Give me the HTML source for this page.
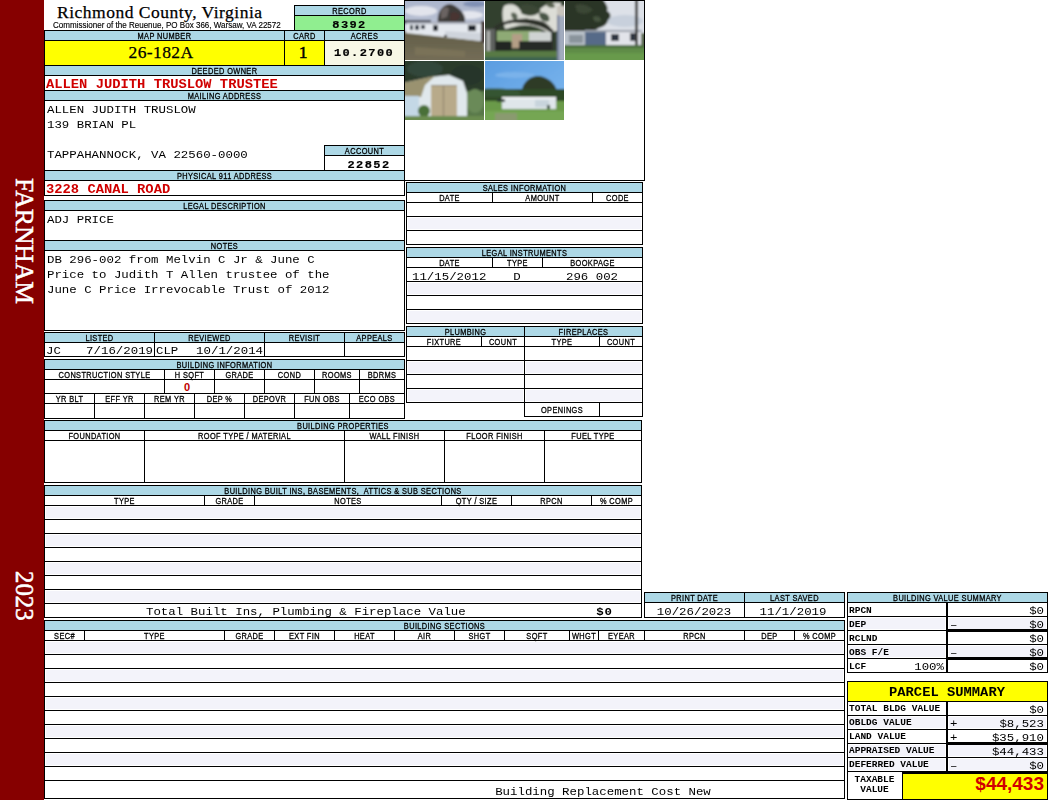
<!DOCTYPE html>
<html><head><meta charset="utf-8"><style>
html,body{margin:0;padding:0;background:#fff;}
body{width:1050px;height:800px;position:relative;overflow:hidden;}
.a{position:absolute;}
.t{position:absolute;white-space:pre;overflow:visible;}
</style></head><body>
<div class="a" style="left:405px;top:1px;width:79px;height:59px;overflow:hidden"><svg width="79" height="59" viewBox="0 0 79 59" style="display:block"><defs><filter id="pb1" x="-10%" y="-10%" width="120%" height="120%"><feGaussianBlur stdDeviation="0.8"/></filter></defs><g filter="url(#pb1)">
<defs><linearGradient id="s1" x1="0" y1="0" x2="0" y2="1"><stop offset="0" stop-color="#aab4cc"/><stop offset="1" stop-color="#d2d6e0"/></linearGradient>
<linearGradient id="g1" x1="0" y1="0" x2="0" y2="1"><stop offset="0" stop-color="#625e48"/><stop offset="1" stop-color="#756e58"/></linearGradient></defs>
<rect x="-2" y="-2" width="83" height="63" fill="url(#s1)"/>
<ellipse cx="16" cy="10" rx="16" ry="5" fill="#e2e4ec"/>
<ellipse cx="64" cy="14" rx="14" ry="4" fill="#e4e6ee"/>
<ellipse cx="70" cy="3" rx="12" ry="3" fill="#8090b4"/>
<path d="M33 22 C32 16 34 10 37 7 C40 3 46 2 50 5 C55 8 59 12 60 17 L60 22 Z" fill="#3e3a38"/>
<path d="M36 10 C38 6 42 5 44 8 L42 16 L36 18Z" fill="#6a6462"/>
<path d="M46 12 C50 10 54 12 55 16 L50 20 L45 19Z" fill="#4a3632"/>
<rect x="-2" y="19" width="28" height="4" fill="#3a3c4a"/>
<path d="M-2 30 L79 38 L81 61 L-2 61Z" fill="url(#g1)"/>
<path d="M10 46 L60 50 L60 56 L10 54Z" fill="#7a7258"/>
<path d="M1 22 L76 22 L76 40 L1 32Z" fill="#e4e8ee"/>
<path d="M40 30 L76 32 L76 40 L40 36Z" fill="#cfd4dc"/>
<rect x="1" y="21" width="75" height="2" fill="#a8acb8"/>
<rect x="5" y="24" width="3" height="5" fill="#26323c"/>
<rect x="10" y="24" width="4" height="5" fill="#26323c"/>
<rect x="16" y="24" width="4" height="4" fill="#26323c"/>
<rect x="28" y="24" width="5" height="6" fill="#20262e"/>
<rect x="63" y="24" width="8" height="6" fill="#20262e"/>
<rect x="76" y="20" width="5" height="22" fill="#4a3c3a"/>
<rect x="39" y="34" width="3" height="2" fill="#303030"/>
</g></svg></div><div class="a" style="left:485px;top:1px;width:79px;height:59px;overflow:hidden"><svg width="79" height="59" viewBox="0 0 79 59" style="display:block"><defs><filter id="pb2" x="-10%" y="-10%" width="120%" height="120%"><feGaussianBlur stdDeviation="0.8"/></filter></defs><g filter="url(#pb2)">
<rect x="-2" y="-2" width="83" height="63" fill="#33402e"/>
<path d="M19 5 C24 2 32 3 35 9 C40 14 46 14 54 9 C60 4 66 0 76 2 L74 30 L62 31 C56 27 48 24 40 24 C32 24 26 27 20 28 C18 20 16 12 19 5Z" fill="#dcddd6"/>
<path d="M36 4 C42 2 52 4 56 10 C50 16 42 16 36 12Z" fill="#3a4636"/>
<path d="M54 12 C60 10 66 14 64 20 C58 22 54 18 54 12Z" fill="#4a5646"/>
<path d="M26 12 C30 10 34 14 32 18 C28 20 26 16 26 12Z" fill="#5a6454"/>
<path d="M60 2 C64 0 70 2 70 6 C66 8 62 6 60 2Z" fill="#56604e"/>
<path d="M38 18 C42 16 46 18 46 21 C42 22 40 21 38 18Z" fill="#606a5a"/>
<path d="M8 27 C20 17 40 16 56 20 C62 22 66 26 68 31 L66 32 C58 25 44 22 30 22 C20 22 14 26 10 31Z" fill="#2e302c"/>
<rect x="12" y="30" width="44" height="11" fill="#8eaa74"/>
<rect x="44" y="31" width="24" height="14" fill="#cfd3d2"/>
<rect x="27" y="33" width="10" height="14" fill="#b39e86"/>
<rect x="8" y="40" width="18" height="11" fill="#242824"/>
<rect x="34" y="40" width="32" height="10" fill="#282a28"/>
<rect x="66" y="28" width="2" height="24" fill="#2a2a2a"/>
<rect x="-2" y="28" width="12" height="25" fill="#5e625e"/>
<rect x="2" y="30" width="3" height="21" fill="#b0b2b0"/>
<rect x="-2" y="50" width="83" height="11" fill="#587a44"/>
<rect x="-2" y="56" width="83" height="5" fill="#3e6450"/>
<rect x="72" y="14" width="8" height="46" fill="#a2acbe"/>
<rect x="72" y="5" width="8" height="10" fill="#c8c4bc"/>
<rect x="72" y="14" width="2" height="46" fill="#76809a"/>
</g></svg></div><div class="a" style="left:565px;top:1px;width:79px;height:59px;overflow:hidden"><svg width="79" height="59" viewBox="0 0 79 59" style="display:block"><defs><filter id="pb3" x="-10%" y="-10%" width="120%" height="120%"><feGaussianBlur stdDeviation="0.8"/></filter></defs><g filter="url(#pb3)">
<rect x="-2" y="-2" width="83" height="63" fill="#dde1e8"/>
<ellipse cx="60" cy="20" rx="18" ry="6" fill="#c8d0dc"/>
<path d="M-2 -2 H38 C40 2 44 6 42 10 C46 12 47 16 43 19 C42 24 38 26 34 27 C30 30 24 31 18 30 L-2 33Z" fill="#2a3526"/>
<path d="M10 4 C16 2 24 4 28 9 C24 13 18 14 12 11Z" fill="#3a4634"/>
<path d="M28 16 C32 14 36 16 36 20 C32 22 28 20 28 16Z" fill="#465440"/>
<rect x="26" y="26" width="2" height="6" fill="#2a2a24"/>
<rect x="-2" y="30" width="22" height="14" fill="#b8c0c8"/>
<rect x="4" y="34" width="14" height="8" fill="#8a949c"/>
<rect x="20" y="29" width="21" height="15" fill="#566a88"/>
<rect x="41" y="29" width="36" height="15" fill="#e2e4ea"/>
<rect x="20" y="29" width="57" height="2" fill="#9aa0ac"/>
<rect x="46" y="33" width="8" height="7" fill="#2e3440"/>
<rect x="65" y="32" width="5" height="8" fill="#2e3440"/>
<rect x="70" y="-2" width="3" height="48" fill="#3c3c3c"/>
<rect x="76" y="32" width="5" height="12" fill="#5a6a50"/>
<rect x="-2" y="44" width="83" height="17" fill="#5e8c46"/>
<rect x="-2" y="44" width="83" height="3" fill="#4e7040"/>
<rect x="-2" y="52" width="83" height="9" fill="#679a4c"/>
</g></svg></div><div class="a" style="left:405px;top:61px;width:79px;height:59px;overflow:hidden"><svg width="79" height="59" viewBox="0 0 79 59" style="display:block"><defs><filter id="pb4" x="-10%" y="-10%" width="120%" height="120%"><feGaussianBlur stdDeviation="0.8"/></filter></defs><g filter="url(#pb4)">
<rect x="-2" y="-2" width="83" height="63" fill="#2a3a2c"/>
<ellipse cx="20" cy="8" rx="18" ry="8" fill="#33463a"/>
<ellipse cx="62" cy="14" rx="16" ry="10" fill="#26342a"/>
<rect x="60" y="30" width="21" height="27" fill="#58784a"/>
<ellipse cx="70" cy="40" rx="9" ry="12" fill="#6a8a58"/>
<path d="M-2 22 L26 16 L44 14 L58 20 L62 32 L62 56 L14 56 L14 36 L-2 36Z" fill="#e0e8ec"/>
<path d="M-2 22 L30 15 L20 24 L16 36 L-2 36Z" fill="#9a9270"/>
<rect x="-2" y="35" width="16" height="21" fill="#c4d8e6"/>
<rect x="26" y="24" width="26" height="31" fill="#b8aa8a"/>
<rect x="38" y="24" width="1" height="31" fill="#8a7e66"/>
<rect x="26" y="24" width="26" height="1" fill="#8a8070"/>
<ellipse cx="19" cy="50" rx="6" ry="6" fill="#4a7038"/>
<rect x="-2" y="55" width="83" height="6" fill="#6a8c50"/>
</g></svg></div><div class="a" style="left:485px;top:61px;width:79px;height:59px;overflow:hidden"><svg width="79" height="59" viewBox="0 0 79 59" style="display:block"><defs><filter id="pb5" x="-10%" y="-10%" width="120%" height="120%"><feGaussianBlur stdDeviation="0.8"/></filter></defs><g filter="url(#pb5)">
<defs><linearGradient id="s5" x1="0" y1="0" x2="1" y2="1"><stop offset="0" stop-color="#5a9ce0"/><stop offset="1" stop-color="#80baf0"/></linearGradient></defs>
<rect x="-2" y="-2" width="83" height="63" fill="url(#s5)"/>
<ellipse cx="30" cy="14" rx="20" ry="3" fill="#7ab2ea"/>
<path d="M36 36 C36 24 42 16 52 15 C62 15 70 22 72 30 L72 38Z" fill="#2e3a26"/>
<rect x="-2" y="28" width="83" height="14" fill="#2e4828"/>
<path d="M-2 28 C10 27 25 28 34 30 L36 36 L-2 36Z" fill="#355530"/>
<rect x="-2" y="40" width="83" height="21" fill="#6a9a4a"/>
<rect x="-2" y="50" width="83" height="11" fill="#74a652"/>
<rect x="10" y="52" width="22" height="9" fill="#8a9a70"/>
<rect x="17" y="36" width="54" height="12" fill="#dfe6ea"/>
<rect x="17" y="36" width="54" height="2" fill="#f2f4f6"/>
<rect x="50" y="39" width="14" height="7" fill="#c8d4dc"/>
<rect x="62" y="44" width="3" height="4" fill="#2a4a30"/>
<rect x="12" y="38" width="8" height="3" fill="#2a3a30"/>
</g></svg></div>
<div class="a" style="left:0px;top:0px;width:44px;height:800px;background:#860000"></div>
<div class="t" style="left:11px;top:178px;width:26px;height:130px;color:#fff;font-family:'Liberation Serif',serif;font-size:25.6px;line-height:26px;writing-mode:vertical-rl;-webkit-text-stroke:0.5px #fff">FARNHAM</div>
<div class="t" style="left:11px;top:571px;width:26px;height:60px;color:#fff;font-family:'Liberation Serif',serif;font-size:24.8px;line-height:26px;writing-mode:vertical-rl;-webkit-text-stroke:0.5px #fff">2023</div>
<div class="t" style="left:57px;top:3.59px;width:343px;font-family:'Liberation Serif', serif;font-size:17.5px;line-height:17.5px;height:17.5px;text-align:left;font-weight:normal;color:#000;letter-spacing:0.5px;-webkit-text-stroke:0.25px #000;">Richmond County, Virginia</div>
<div class="t" style="left:53px;top:20.97px;width:347px;font-family:'Liberation Sans', sans-serif;font-size:8.6px;line-height:8.6px;height:8.6px;text-align:left;font-weight:normal;color:#000;letter-spacing:0px;transform:scaleX(0.935);transform-origin:0 0;-webkit-text-stroke:0.15px #000;">Commissioner of the Reuenue, PO Box 366, Warsaw, VA 22572</div>
<div class="a" style="left:295px;top:6px;width:109px;height:9px;background:#add8e6"></div>
<div class="t" style="left:295px;top:6.97px;width:109px;font-family:'Liberation Sans', sans-serif;font-size:8.6px;line-height:8.6px;height:8.6px;text-align:center;font-weight:normal;color:#000;letter-spacing:0.45px;transform:scaleX(0.86);transform-origin:50% 50%;-webkit-text-stroke:0.3px #000;">RECORD</div>
<div class="a" style="left:295px;top:16px;width:109px;height:14px;background:#90ee90"></div>
<div class="a" style="left:294px;top:5px;width:111px;height:1px;background:#000"></div>
<div class="a" style="left:294px;top:30px;width:111px;height:1px;background:#000"></div>
<div class="a" style="left:294px;top:5px;width:1px;height:26px;background:#000"></div>
<div class="a" style="left:404px;top:5px;width:1px;height:26px;background:#000"></div>
<div class="a" style="left:294px;top:15px;width:111px;height:1px;background:#000"></div>
<div class="t" style="left:295px;top:19.05px;width:109px;font-family:'Liberation Mono', monospace;font-size:12px;line-height:12px;height:12px;text-align:center;font-weight:bold;color:#000;letter-spacing:1.4px;transform:scaleY(0.84);transform-origin:0 9.20px;-webkit-text-stroke:0.2px #000;">8392</div>
<div class="a" style="left:45px;top:31px;width:239px;height:9px;background:#add8e6"></div>
<div class="t" style="left:45px;top:31.97px;width:239px;font-family:'Liberation Sans', sans-serif;font-size:8.6px;line-height:8.6px;height:8.6px;text-align:center;font-weight:normal;color:#000;letter-spacing:0.45px;transform:scaleX(0.86);transform-origin:50% 50%;-webkit-text-stroke:0.3px #000;">MAP NUMBER</div>
<div class="a" style="left:285px;top:31px;width:39px;height:9px;background:#add8e6"></div>
<div class="t" style="left:285px;top:31.97px;width:39px;font-family:'Liberation Sans', sans-serif;font-size:8.6px;line-height:8.6px;height:8.6px;text-align:center;font-weight:normal;color:#000;letter-spacing:0.45px;transform:scaleX(0.86);transform-origin:50% 50%;-webkit-text-stroke:0.3px #000;">CARD</div>
<div class="a" style="left:325px;top:31px;width:79px;height:9px;background:#add8e6"></div>
<div class="t" style="left:325px;top:31.97px;width:79px;font-family:'Liberation Sans', sans-serif;font-size:8.6px;line-height:8.6px;height:8.6px;text-align:center;font-weight:normal;color:#000;letter-spacing:0.45px;transform:scaleX(0.86);transform-origin:50% 50%;-webkit-text-stroke:0.3px #000;">ACRES</div>
<div class="a" style="left:45px;top:41px;width:239px;height:24px;background:#ffff00"></div>
<div class="a" style="left:285px;top:41px;width:39px;height:24px;background:#ffff00"></div>
<div class="a" style="left:325px;top:41px;width:79px;height:24px;background:#f7f7e6"></div>
<div class="a" style="left:44px;top:30px;width:361px;height:1px;background:#000"></div>
<div class="a" style="left:44px;top:40px;width:361px;height:1px;background:#000"></div>
<div class="a" style="left:44px;top:65px;width:361px;height:1px;background:#000"></div>
<div class="a" style="left:44px;top:30px;width:1px;height:36px;background:#000"></div>
<div class="a" style="left:284px;top:30px;width:1px;height:36px;background:#000"></div>
<div class="a" style="left:324px;top:30px;width:1px;height:36px;background:#000"></div>
<div class="a" style="left:404px;top:30px;width:1px;height:36px;background:#000"></div>
<div class="t" style="left:38px;top:43.59px;width:246px;font-family:'Liberation Serif', serif;font-size:17.5px;line-height:17.5px;height:17.5px;text-align:center;font-weight:normal;color:#000;letter-spacing:0.4px;-webkit-text-stroke:0.25px #000;">26-182A</div>
<div class="t" style="left:282px;top:43.59px;width:42px;font-family:'Liberation Serif', serif;font-size:17.5px;line-height:17.5px;height:17.5px;text-align:center;font-weight:normal;color:#000;letter-spacing:0px;-webkit-text-stroke:0.5px #000;">1</div>
<div class="t" style="left:324px;top:47.05px;width:80px;font-family:'Liberation Mono', monospace;font-size:12px;line-height:12px;height:12px;text-align:center;font-weight:bold;color:#000;letter-spacing:1.4px;transform:scaleY(0.88);transform-origin:0 9.20px;-webkit-text-stroke:0.2px #000;">10.2700</div>
<div class="a" style="left:45px;top:66px;width:359px;height:9px;background:#add8e6"></div>
<div class="t" style="left:45px;top:66.97px;width:359px;font-family:'Liberation Sans', sans-serif;font-size:8.6px;line-height:8.6px;height:8.6px;text-align:center;font-weight:normal;color:#000;letter-spacing:0.45px;transform:scaleX(0.86);transform-origin:50% 50%;-webkit-text-stroke:0.3px #000;">DEEDED OWNER</div>
<div class="a" style="left:44px;top:75px;width:361px;height:1px;background:#000"></div>
<div class="a" style="left:44px;top:90px;width:361px;height:1px;background:#000"></div>
<div class="a" style="left:44px;top:65px;width:1px;height:26px;background:#000"></div>
<div class="a" style="left:404px;top:65px;width:1px;height:26px;background:#000"></div>
<div class="t" style="left:46px;top:77.67px;width:358px;font-family:'Liberation Mono', monospace;font-size:13.8px;line-height:13.8px;height:13.8px;text-align:left;font-weight:bold;color:#d00000;letter-spacing:0px;transform:scaleY(0.93);transform-origin:0 10.58px;">ALLEN JUDITH TRUSLOW TRUSTEE</div>
<div class="a" style="left:45px;top:91px;width:359px;height:9px;background:#add8e6"></div>
<div class="t" style="left:45px;top:91.97px;width:359px;font-family:'Liberation Sans', sans-serif;font-size:8.6px;line-height:8.6px;height:8.6px;text-align:center;font-weight:normal;color:#000;letter-spacing:0.45px;transform:scaleX(0.86);transform-origin:50% 50%;-webkit-text-stroke:0.3px #000;">MAILING ADDRESS</div>
<div class="a" style="left:44px;top:100px;width:361px;height:1px;background:#000"></div>
<div class="a" style="left:44px;top:90px;width:1px;height:81px;background:#000"></div>
<div class="a" style="left:404px;top:90px;width:1px;height:81px;background:#000"></div>
<div class="t" style="left:47px;top:103.75px;width:357px;font-family:'Liberation Mono', monospace;font-size:12.4px;line-height:12.4px;height:12.4px;text-align:left;font-weight:normal;color:#000;letter-spacing:0px;transform:scaleY(0.93);transform-origin:0 9.50px;">ALLEN JUDITH TRUSLOW</div>
<div class="t" style="left:47px;top:118.75px;width:357px;font-family:'Liberation Mono', monospace;font-size:12.4px;line-height:12.4px;height:12.4px;text-align:left;font-weight:normal;color:#000;letter-spacing:0px;transform:scaleY(0.93);transform-origin:0 9.50px;">139 BRIAN PL</div>
<div class="t" style="left:47px;top:148.75px;width:357px;font-family:'Liberation Mono', monospace;font-size:12.4px;line-height:12.4px;height:12.4px;text-align:left;font-weight:normal;color:#000;letter-spacing:0px;transform:scaleY(0.93);transform-origin:0 9.50px;">TAPPAHANNOCK, VA 22560-0000</div>
<div class="a" style="left:325px;top:146px;width:79px;height:9px;background:#add8e6"></div>
<div class="t" style="left:325px;top:146.97px;width:79px;font-family:'Liberation Sans', sans-serif;font-size:8.6px;line-height:8.6px;height:8.6px;text-align:center;font-weight:normal;color:#000;letter-spacing:0.45px;transform:scaleX(0.86);transform-origin:50% 50%;-webkit-text-stroke:0.3px #000;">ACCOUNT</div>
<div class="a" style="left:324px;top:145px;width:81px;height:1px;background:#000"></div>
<div class="a" style="left:324px;top:170px;width:81px;height:1px;background:#000"></div>
<div class="a" style="left:324px;top:145px;width:1px;height:26px;background:#000"></div>
<div class="a" style="left:404px;top:145px;width:1px;height:26px;background:#000"></div>
<div class="a" style="left:324px;top:155px;width:81px;height:1px;background:#000"></div>
<div class="t" style="left:329px;top:159.05px;width:80px;font-family:'Liberation Mono', monospace;font-size:12px;line-height:12px;height:12px;text-align:center;font-weight:bold;color:#000;letter-spacing:1.4px;transform:scaleY(0.88);transform-origin:0 9.20px;-webkit-text-stroke:0.2px #000;">22852</div>
<div class="a" style="left:45px;top:171px;width:359px;height:9px;background:#add8e6"></div>
<div class="t" style="left:45px;top:171.97px;width:359px;font-family:'Liberation Sans', sans-serif;font-size:8.6px;line-height:8.6px;height:8.6px;text-align:center;font-weight:normal;color:#000;letter-spacing:0.45px;transform:scaleX(0.86);transform-origin:50% 50%;-webkit-text-stroke:0.3px #000;">PHYSICAL 911 ADDRESS</div>
<div class="a" style="left:44px;top:170px;width:361px;height:1px;background:#000"></div>
<div class="a" style="left:44px;top:180px;width:361px;height:1px;background:#000"></div>
<div class="a" style="left:44px;top:195px;width:361px;height:1px;background:#000"></div>
<div class="a" style="left:44px;top:170px;width:1px;height:26px;background:#000"></div>
<div class="a" style="left:404px;top:170px;width:1px;height:26px;background:#000"></div>
<div class="t" style="left:46px;top:182.67px;width:358px;font-family:'Liberation Mono', monospace;font-size:13.8px;line-height:13.8px;height:13.8px;text-align:left;font-weight:bold;color:#d00000;letter-spacing:0px;transform:scaleY(0.93);transform-origin:0 10.58px;">3228 CANAL ROAD</div>
<div class="a" style="left:45px;top:201px;width:359px;height:9px;background:#add8e6"></div>
<div class="t" style="left:45px;top:201.97px;width:359px;font-family:'Liberation Sans', sans-serif;font-size:8.6px;line-height:8.6px;height:8.6px;text-align:center;font-weight:normal;color:#000;letter-spacing:0.45px;transform:scaleX(0.86);transform-origin:50% 50%;-webkit-text-stroke:0.3px #000;">LEGAL DESCRIPTION</div>
<div class="a" style="left:44px;top:200px;width:361px;height:1px;background:#000"></div>
<div class="a" style="left:44px;top:210px;width:361px;height:1px;background:#000"></div>
<div class="a" style="left:44px;top:240px;width:361px;height:1px;background:#000"></div>
<div class="a" style="left:44px;top:200px;width:1px;height:41px;background:#000"></div>
<div class="a" style="left:404px;top:200px;width:1px;height:41px;background:#000"></div>
<div class="t" style="left:47px;top:213.75px;width:357px;font-family:'Liberation Mono', monospace;font-size:12.4px;line-height:12.4px;height:12.4px;text-align:left;font-weight:normal;color:#000;letter-spacing:0px;transform:scaleY(0.93);transform-origin:0 9.50px;">ADJ PRICE</div>
<div class="a" style="left:45px;top:241px;width:359px;height:9px;background:#add8e6"></div>
<div class="t" style="left:45px;top:241.97px;width:359px;font-family:'Liberation Sans', sans-serif;font-size:8.6px;line-height:8.6px;height:8.6px;text-align:center;font-weight:normal;color:#000;letter-spacing:0.45px;transform:scaleX(0.86);transform-origin:50% 50%;-webkit-text-stroke:0.3px #000;">NOTES</div>
<div class="a" style="left:44px;top:250px;width:361px;height:1px;background:#000"></div>
<div class="a" style="left:44px;top:330px;width:361px;height:1px;background:#000"></div>
<div class="a" style="left:44px;top:240px;width:1px;height:91px;background:#000"></div>
<div class="a" style="left:404px;top:240px;width:1px;height:91px;background:#000"></div>
<div class="t" style="left:47px;top:253.75px;width:357px;font-family:'Liberation Mono', monospace;font-size:12.4px;line-height:12.4px;height:12.4px;text-align:left;font-weight:normal;color:#000;letter-spacing:0px;transform:scaleY(0.93);transform-origin:0 9.50px;">DB 296-002 from Melvin C Jr &amp; June C</div>
<div class="t" style="left:47px;top:268.75px;width:357px;font-family:'Liberation Mono', monospace;font-size:12.4px;line-height:12.4px;height:12.4px;text-align:left;font-weight:normal;color:#000;letter-spacing:0px;transform:scaleY(0.93);transform-origin:0 9.50px;">Price to Judith T Allen trustee of the</div>
<div class="t" style="left:47px;top:283.75px;width:357px;font-family:'Liberation Mono', monospace;font-size:12.4px;line-height:12.4px;height:12.4px;text-align:left;font-weight:normal;color:#000;letter-spacing:0px;transform:scaleY(0.93);transform-origin:0 9.50px;">June C Price Irrevocable Trust of 2012</div>
<div class="a" style="left:45px;top:333px;width:109px;height:9px;background:#add8e6"></div>
<div class="t" style="left:45px;top:333.97px;width:109px;font-family:'Liberation Sans', sans-serif;font-size:8.6px;line-height:8.6px;height:8.6px;text-align:center;font-weight:normal;color:#000;letter-spacing:0.45px;transform:scaleX(0.86);transform-origin:50% 50%;-webkit-text-stroke:0.3px #000;">LISTED</div>
<div class="a" style="left:155px;top:333px;width:109px;height:9px;background:#add8e6"></div>
<div class="t" style="left:155px;top:333.97px;width:109px;font-family:'Liberation Sans', sans-serif;font-size:8.6px;line-height:8.6px;height:8.6px;text-align:center;font-weight:normal;color:#000;letter-spacing:0.45px;transform:scaleX(0.86);transform-origin:50% 50%;-webkit-text-stroke:0.3px #000;">REVIEWED</div>
<div class="a" style="left:265px;top:333px;width:79px;height:9px;background:#add8e6"></div>
<div class="t" style="left:265px;top:333.97px;width:79px;font-family:'Liberation Sans', sans-serif;font-size:8.6px;line-height:8.6px;height:8.6px;text-align:center;font-weight:normal;color:#000;letter-spacing:0.45px;transform:scaleX(0.86);transform-origin:50% 50%;-webkit-text-stroke:0.3px #000;">REVISIT</div>
<div class="a" style="left:345px;top:333px;width:59px;height:9px;background:#add8e6"></div>
<div class="t" style="left:345px;top:333.97px;width:59px;font-family:'Liberation Sans', sans-serif;font-size:8.6px;line-height:8.6px;height:8.6px;text-align:center;font-weight:normal;color:#000;letter-spacing:0.45px;transform:scaleX(0.86);transform-origin:50% 50%;-webkit-text-stroke:0.3px #000;">APPEALS</div>
<div class="a" style="left:44px;top:332px;width:361px;height:1px;background:#000"></div>
<div class="a" style="left:44px;top:342px;width:361px;height:1px;background:#000"></div>
<div class="a" style="left:44px;top:356px;width:361px;height:1px;background:#000"></div>
<div class="a" style="left:44px;top:332px;width:1px;height:25px;background:#000"></div>
<div class="a" style="left:154px;top:332px;width:1px;height:25px;background:#000"></div>
<div class="a" style="left:264px;top:332px;width:1px;height:25px;background:#000"></div>
<div class="a" style="left:344px;top:332px;width:1px;height:25px;background:#000"></div>
<div class="a" style="left:404px;top:332px;width:1px;height:25px;background:#000"></div>
<div class="t" style="left:46px;top:344.75px;width:108px;font-family:'Liberation Mono', monospace;font-size:12.4px;line-height:12.4px;height:12.4px;text-align:left;font-weight:normal;color:#000;letter-spacing:0px;transform:scaleY(0.93);transform-origin:0 9.50px;">JC</div>
<div class="t" style="left:44px;top:344.75px;width:109px;font-family:'Liberation Mono', monospace;font-size:12.4px;line-height:12.4px;height:12.4px;text-align:right;font-weight:normal;color:#000;letter-spacing:0px;transform:scaleY(0.93);transform-origin:0 9.50px;">7/16/2019</div>
<div class="t" style="left:156px;top:344.75px;width:108px;font-family:'Liberation Mono', monospace;font-size:12.4px;line-height:12.4px;height:12.4px;text-align:left;font-weight:normal;color:#000;letter-spacing:0px;transform:scaleY(0.93);transform-origin:0 9.50px;">CLP</div>
<div class="t" style="left:154px;top:344.75px;width:109px;font-family:'Liberation Mono', monospace;font-size:12.4px;line-height:12.4px;height:12.4px;text-align:right;font-weight:normal;color:#000;letter-spacing:0px;transform:scaleY(0.93);transform-origin:0 9.50px;">10/1/2014</div>
<div class="a" style="left:45px;top:360px;width:359px;height:9px;background:#add8e6"></div>
<div class="t" style="left:45px;top:360.97px;width:359px;font-family:'Liberation Sans', sans-serif;font-size:8.6px;line-height:8.6px;height:8.6px;text-align:center;font-weight:normal;color:#000;letter-spacing:0.45px;transform:scaleX(0.86);transform-origin:50% 50%;-webkit-text-stroke:0.3px #000;">BUILDING INFORMATION</div>
<div class="a" style="left:44px;top:359px;width:361px;height:1px;background:#000"></div>
<div class="a" style="left:44px;top:369px;width:361px;height:1px;background:#000"></div>
<div class="a" style="left:44px;top:379px;width:361px;height:1px;background:#000"></div>
<div class="a" style="left:44px;top:393px;width:361px;height:1px;background:#000"></div>
<div class="a" style="left:44px;top:403px;width:361px;height:1px;background:#000"></div>
<div class="a" style="left:44px;top:418px;width:361px;height:1px;background:#000"></div>
<div class="a" style="left:44px;top:359px;width:1px;height:60px;background:#000"></div>
<div class="a" style="left:404px;top:359px;width:1px;height:60px;background:#000"></div>
<div class="t" style="left:45px;top:370.97px;width:119px;font-family:'Liberation Sans', sans-serif;font-size:8.6px;line-height:8.6px;height:8.6px;text-align:center;font-weight:normal;color:#000;letter-spacing:0.45px;transform:scaleX(0.86);transform-origin:50% 50%;-webkit-text-stroke:0.3px #000;">CONSTRUCTION STYLE</div>
<div class="t" style="left:165px;top:370.97px;width:49px;font-family:'Liberation Sans', sans-serif;font-size:8.6px;line-height:8.6px;height:8.6px;text-align:center;font-weight:normal;color:#000;letter-spacing:0.45px;transform:scaleX(0.86);transform-origin:50% 50%;-webkit-text-stroke:0.3px #000;">H SQFT</div>
<div class="t" style="left:215px;top:370.97px;width:49px;font-family:'Liberation Sans', sans-serif;font-size:8.6px;line-height:8.6px;height:8.6px;text-align:center;font-weight:normal;color:#000;letter-spacing:0.45px;transform:scaleX(0.86);transform-origin:50% 50%;-webkit-text-stroke:0.3px #000;">GRADE</div>
<div class="t" style="left:265px;top:370.97px;width:49px;font-family:'Liberation Sans', sans-serif;font-size:8.6px;line-height:8.6px;height:8.6px;text-align:center;font-weight:normal;color:#000;letter-spacing:0.45px;transform:scaleX(0.86);transform-origin:50% 50%;-webkit-text-stroke:0.3px #000;">COND</div>
<div class="t" style="left:315px;top:370.97px;width:44px;font-family:'Liberation Sans', sans-serif;font-size:8.6px;line-height:8.6px;height:8.6px;text-align:center;font-weight:normal;color:#000;letter-spacing:0.45px;transform:scaleX(0.86);transform-origin:50% 50%;-webkit-text-stroke:0.3px #000;">ROOMS</div>
<div class="t" style="left:360px;top:370.97px;width:44px;font-family:'Liberation Sans', sans-serif;font-size:8.6px;line-height:8.6px;height:8.6px;text-align:center;font-weight:normal;color:#000;letter-spacing:0.45px;transform:scaleX(0.86);transform-origin:50% 50%;-webkit-text-stroke:0.3px #000;">BDRMS</div>
<div class="a" style="left:164px;top:369px;width:1px;height:25px;background:#000"></div>
<div class="a" style="left:214px;top:369px;width:1px;height:25px;background:#000"></div>
<div class="a" style="left:264px;top:369px;width:1px;height:25px;background:#000"></div>
<div class="a" style="left:314px;top:369px;width:1px;height:25px;background:#000"></div>
<div class="a" style="left:359px;top:369px;width:1px;height:25px;background:#000"></div>
<div class="t" style="left:45px;top:394.97px;width:49px;font-family:'Liberation Sans', sans-serif;font-size:8.6px;line-height:8.6px;height:8.6px;text-align:center;font-weight:normal;color:#000;letter-spacing:0.45px;transform:scaleX(0.86);transform-origin:50% 50%;-webkit-text-stroke:0.3px #000;">YR BLT</div>
<div class="t" style="left:95px;top:394.97px;width:49px;font-family:'Liberation Sans', sans-serif;font-size:8.6px;line-height:8.6px;height:8.6px;text-align:center;font-weight:normal;color:#000;letter-spacing:0.45px;transform:scaleX(0.86);transform-origin:50% 50%;-webkit-text-stroke:0.3px #000;">EFF YR</div>
<div class="t" style="left:145px;top:394.97px;width:49px;font-family:'Liberation Sans', sans-serif;font-size:8.6px;line-height:8.6px;height:8.6px;text-align:center;font-weight:normal;color:#000;letter-spacing:0.45px;transform:scaleX(0.86);transform-origin:50% 50%;-webkit-text-stroke:0.3px #000;">REM YR</div>
<div class="t" style="left:195px;top:394.97px;width:49px;font-family:'Liberation Sans', sans-serif;font-size:8.6px;line-height:8.6px;height:8.6px;text-align:center;font-weight:normal;color:#000;letter-spacing:0.45px;transform:scaleX(0.86);transform-origin:50% 50%;-webkit-text-stroke:0.3px #000;">DEP %</div>
<div class="t" style="left:245px;top:394.97px;width:49px;font-family:'Liberation Sans', sans-serif;font-size:8.6px;line-height:8.6px;height:8.6px;text-align:center;font-weight:normal;color:#000;letter-spacing:0.45px;transform:scaleX(0.86);transform-origin:50% 50%;-webkit-text-stroke:0.3px #000;">DEPOVR</div>
<div class="t" style="left:295px;top:394.97px;width:54px;font-family:'Liberation Sans', sans-serif;font-size:8.6px;line-height:8.6px;height:8.6px;text-align:center;font-weight:normal;color:#000;letter-spacing:0.45px;transform:scaleX(0.86);transform-origin:50% 50%;-webkit-text-stroke:0.3px #000;">FUN OBS</div>
<div class="t" style="left:350px;top:394.97px;width:54px;font-family:'Liberation Sans', sans-serif;font-size:8.6px;line-height:8.6px;height:8.6px;text-align:center;font-weight:normal;color:#000;letter-spacing:0.45px;transform:scaleX(0.86);transform-origin:50% 50%;-webkit-text-stroke:0.3px #000;">ECO OBS</div>
<div class="a" style="left:94px;top:393px;width:1px;height:26px;background:#000"></div>
<div class="a" style="left:144px;top:393px;width:1px;height:26px;background:#000"></div>
<div class="a" style="left:194px;top:393px;width:1px;height:26px;background:#000"></div>
<div class="a" style="left:244px;top:393px;width:1px;height:26px;background:#000"></div>
<div class="a" style="left:294px;top:393px;width:1px;height:26px;background:#000"></div>
<div class="a" style="left:349px;top:393px;width:1px;height:26px;background:#000"></div>
<div class="t" style="left:162px;top:381.94px;width:50px;font-family:'Liberation Sans', sans-serif;font-size:11px;line-height:11px;height:11px;text-align:center;font-weight:bold;color:#c00000;letter-spacing:0px;">0</div>
<div class="a" style="left:45px;top:421px;width:596px;height:9px;background:#add8e6"></div>
<div class="t" style="left:45px;top:421.97px;width:596px;font-family:'Liberation Sans', sans-serif;font-size:8.6px;line-height:8.6px;height:8.6px;text-align:center;font-weight:normal;color:#000;letter-spacing:0.45px;transform:scaleX(0.86);transform-origin:50% 50%;-webkit-text-stroke:0.3px #000;">BUILDING PROPERTIES</div>
<div class="a" style="left:44px;top:420px;width:598px;height:1px;background:#000"></div>
<div class="a" style="left:44px;top:430px;width:598px;height:1px;background:#000"></div>
<div class="a" style="left:44px;top:440px;width:598px;height:1px;background:#000"></div>
<div class="a" style="left:44px;top:482px;width:598px;height:1px;background:#000"></div>
<div class="a" style="left:44px;top:420px;width:1px;height:63px;background:#000"></div>
<div class="a" style="left:641px;top:420px;width:1px;height:63px;background:#000"></div>
<div class="t" style="left:45px;top:431.97px;width:99px;font-family:'Liberation Sans', sans-serif;font-size:8.6px;line-height:8.6px;height:8.6px;text-align:center;font-weight:normal;color:#000;letter-spacing:0.45px;transform:scaleX(0.86);transform-origin:50% 50%;-webkit-text-stroke:0.3px #000;">FOUNDATION</div>
<div class="t" style="left:145px;top:431.97px;width:199px;font-family:'Liberation Sans', sans-serif;font-size:8.6px;line-height:8.6px;height:8.6px;text-align:center;font-weight:normal;color:#000;letter-spacing:0.45px;transform:scaleX(0.86);transform-origin:50% 50%;-webkit-text-stroke:0.3px #000;">ROOF TYPE / MATERIAL</div>
<div class="t" style="left:345px;top:431.97px;width:99px;font-family:'Liberation Sans', sans-serif;font-size:8.6px;line-height:8.6px;height:8.6px;text-align:center;font-weight:normal;color:#000;letter-spacing:0.45px;transform:scaleX(0.86);transform-origin:50% 50%;-webkit-text-stroke:0.3px #000;">WALL FINISH</div>
<div class="t" style="left:445px;top:431.97px;width:99px;font-family:'Liberation Sans', sans-serif;font-size:8.6px;line-height:8.6px;height:8.6px;text-align:center;font-weight:normal;color:#000;letter-spacing:0.45px;transform:scaleX(0.86);transform-origin:50% 50%;-webkit-text-stroke:0.3px #000;">FLOOR FINISH</div>
<div class="t" style="left:545px;top:431.97px;width:96px;font-family:'Liberation Sans', sans-serif;font-size:8.6px;line-height:8.6px;height:8.6px;text-align:center;font-weight:normal;color:#000;letter-spacing:0.45px;transform:scaleX(0.86);transform-origin:50% 50%;-webkit-text-stroke:0.3px #000;">FUEL TYPE</div>
<div class="a" style="left:144px;top:430px;width:1px;height:53px;background:#000"></div>
<div class="a" style="left:344px;top:430px;width:1px;height:53px;background:#000"></div>
<div class="a" style="left:444px;top:430px;width:1px;height:53px;background:#000"></div>
<div class="a" style="left:544px;top:430px;width:1px;height:53px;background:#000"></div>
<div class="a" style="left:45px;top:486px;width:596px;height:9px;background:#add8e6"></div>
<div class="t" style="left:45px;top:486.97px;width:596px;font-family:'Liberation Sans', sans-serif;font-size:8.6px;line-height:8.6px;height:8.6px;text-align:center;font-weight:normal;color:#000;letter-spacing:0.45px;transform:scaleX(0.86);transform-origin:50% 50%;-webkit-text-stroke:0.3px #000;">BUILDING BUILT INS, BASEMENTS,  ATTICS &amp; SUB SECTIONS</div>
<div class="a" style="left:44px;top:485px;width:598px;height:1px;background:#000"></div>
<div class="a" style="left:44px;top:495px;width:598px;height:1px;background:#000"></div>
<div class="a" style="left:44px;top:505px;width:598px;height:1px;background:#000"></div>
<div class="t" style="left:45px;top:496.97px;width:159px;font-family:'Liberation Sans', sans-serif;font-size:8.6px;line-height:8.6px;height:8.6px;text-align:center;font-weight:normal;color:#000;letter-spacing:0.45px;transform:scaleX(0.86);transform-origin:50% 50%;-webkit-text-stroke:0.3px #000;">TYPE</div>
<div class="t" style="left:205px;top:496.97px;width:49px;font-family:'Liberation Sans', sans-serif;font-size:8.6px;line-height:8.6px;height:8.6px;text-align:center;font-weight:normal;color:#000;letter-spacing:0.45px;transform:scaleX(0.86);transform-origin:50% 50%;-webkit-text-stroke:0.3px #000;">GRADE</div>
<div class="t" style="left:255px;top:496.97px;width:186px;font-family:'Liberation Sans', sans-serif;font-size:8.6px;line-height:8.6px;height:8.6px;text-align:center;font-weight:normal;color:#000;letter-spacing:0.45px;transform:scaleX(0.86);transform-origin:50% 50%;-webkit-text-stroke:0.3px #000;">NOTES</div>
<div class="t" style="left:442px;top:496.97px;width:69px;font-family:'Liberation Sans', sans-serif;font-size:8.6px;line-height:8.6px;height:8.6px;text-align:center;font-weight:normal;color:#000;letter-spacing:0.45px;transform:scaleX(0.86);transform-origin:50% 50%;-webkit-text-stroke:0.3px #000;">QTY / SIZE</div>
<div class="t" style="left:512px;top:496.97px;width:79px;font-family:'Liberation Sans', sans-serif;font-size:8.6px;line-height:8.6px;height:8.6px;text-align:center;font-weight:normal;color:#000;letter-spacing:0.45px;transform:scaleX(0.86);transform-origin:50% 50%;-webkit-text-stroke:0.3px #000;">RPCN</div>
<div class="t" style="left:592px;top:496.97px;width:49px;font-family:'Liberation Sans', sans-serif;font-size:8.6px;line-height:8.6px;height:8.6px;text-align:center;font-weight:normal;color:#000;letter-spacing:0.45px;transform:scaleX(0.86);transform-origin:50% 50%;-webkit-text-stroke:0.3px #000;">% COMP</div>
<div class="a" style="left:204px;top:495px;width:1px;height:11px;background:#000"></div>
<div class="a" style="left:254px;top:495px;width:1px;height:11px;background:#000"></div>
<div class="a" style="left:441px;top:495px;width:1px;height:11px;background:#000"></div>
<div class="a" style="left:511px;top:495px;width:1px;height:11px;background:#000"></div>
<div class="a" style="left:591px;top:495px;width:1px;height:11px;background:#000"></div>
<div class="a" style="left:46px;top:507px;width:594px;height:11px;background:#f3f3fa"></div>
<div class="a" style="left:46px;top:535px;width:594px;height:11px;background:#f3f3fa"></div>
<div class="a" style="left:46px;top:563px;width:594px;height:11px;background:#f3f3fa"></div>
<div class="a" style="left:46px;top:591px;width:594px;height:11px;background:#f3f3fa"></div>
<div class="a" style="left:44px;top:505px;width:598px;height:1px;background:#000"></div>
<div class="a" style="left:44px;top:519px;width:598px;height:1px;background:#000"></div>
<div class="a" style="left:44px;top:533px;width:598px;height:1px;background:#000"></div>
<div class="a" style="left:44px;top:547px;width:598px;height:1px;background:#000"></div>
<div class="a" style="left:44px;top:561px;width:598px;height:1px;background:#000"></div>
<div class="a" style="left:44px;top:575px;width:598px;height:1px;background:#000"></div>
<div class="a" style="left:44px;top:589px;width:598px;height:1px;background:#000"></div>
<div class="a" style="left:44px;top:603px;width:598px;height:1px;background:#000"></div>
<div class="a" style="left:44px;top:617px;width:598px;height:1px;background:#000"></div>
<div class="a" style="left:44px;top:485px;width:1px;height:133px;background:#000"></div>
<div class="a" style="left:641px;top:485px;width:1px;height:133px;background:#000"></div>
<div class="t" style="left:146px;top:605.75px;width:495px;font-family:'Liberation Mono', monospace;font-size:12.4px;line-height:12.4px;height:12.4px;text-align:left;font-weight:normal;color:#000;letter-spacing:0px;transform:scaleY(0.93);transform-origin:0 9.50px;">Total Built Ins, Plumbing &amp; Fireplace Value</div>
<div class="t" style="left:540px;top:605.75px;width:73px;font-family:'Liberation Mono', monospace;font-size:12.4px;line-height:12.4px;height:12.4px;text-align:right;font-weight:bold;color:#000;letter-spacing:1px;transform:scaleY(0.93);transform-origin:0 9.50px;">$0</div>
<div class="a" style="left:404px;top:0px;width:241px;height:1px;background:#000"></div>
<div class="a" style="left:404px;top:0px;width:1px;height:181px;background:#000"></div>
<div class="a" style="left:644px;top:0px;width:1px;height:181px;background:#000"></div>
<div class="a" style="left:404px;top:180px;width:241px;height:1px;background:#000"></div>
<div class="a" style="left:407px;top:183px;width:235px;height:9px;background:#add8e6"></div>
<div class="t" style="left:407px;top:183.97px;width:235px;font-family:'Liberation Sans', sans-serif;font-size:8.6px;line-height:8.6px;height:8.6px;text-align:center;font-weight:normal;color:#000;letter-spacing:0.45px;transform:scaleX(0.86);transform-origin:50% 50%;-webkit-text-stroke:0.3px #000;">SALES INFORMATION</div>
<div class="a" style="left:406px;top:182px;width:237px;height:1px;background:#000"></div>
<div class="a" style="left:406px;top:192px;width:237px;height:1px;background:#000"></div>
<div class="a" style="left:406px;top:202px;width:237px;height:1px;background:#000"></div>
<div class="t" style="left:407px;top:193.97px;width:85px;font-family:'Liberation Sans', sans-serif;font-size:8.6px;line-height:8.6px;height:8.6px;text-align:center;font-weight:normal;color:#000;letter-spacing:0.45px;transform:scaleX(0.86);transform-origin:50% 50%;-webkit-text-stroke:0.3px #000;">DATE</div>
<div class="t" style="left:493px;top:193.97px;width:99px;font-family:'Liberation Sans', sans-serif;font-size:8.6px;line-height:8.6px;height:8.6px;text-align:center;font-weight:normal;color:#000;letter-spacing:0.45px;transform:scaleX(0.86);transform-origin:50% 50%;-webkit-text-stroke:0.3px #000;">AMOUNT</div>
<div class="t" style="left:593px;top:193.97px;width:49px;font-family:'Liberation Sans', sans-serif;font-size:8.6px;line-height:8.6px;height:8.6px;text-align:center;font-weight:normal;color:#000;letter-spacing:0.45px;transform:scaleX(0.86);transform-origin:50% 50%;-webkit-text-stroke:0.3px #000;">CODE</div>
<div class="a" style="left:492px;top:192px;width:1px;height:11px;background:#000"></div>
<div class="a" style="left:592px;top:192px;width:1px;height:11px;background:#000"></div>
<div class="a" style="left:408px;top:218px;width:233px;height:11px;background:#f3f3fa"></div>
<div class="a" style="left:406px;top:216px;width:237px;height:1px;background:#000"></div>
<div class="a" style="left:406px;top:230px;width:237px;height:1px;background:#000"></div>
<div class="a" style="left:406px;top:244px;width:237px;height:1px;background:#000"></div>
<div class="a" style="left:406px;top:182px;width:1px;height:63px;background:#000"></div>
<div class="a" style="left:642px;top:182px;width:1px;height:63px;background:#000"></div>
<div class="a" style="left:407px;top:248px;width:235px;height:9px;background:#add8e6"></div>
<div class="t" style="left:407px;top:248.97px;width:235px;font-family:'Liberation Sans', sans-serif;font-size:8.6px;line-height:8.6px;height:8.6px;text-align:center;font-weight:normal;color:#000;letter-spacing:0.45px;transform:scaleX(0.86);transform-origin:50% 50%;-webkit-text-stroke:0.3px #000;">LEGAL INSTRUMENTS</div>
<div class="a" style="left:406px;top:247px;width:237px;height:1px;background:#000"></div>
<div class="a" style="left:406px;top:257px;width:237px;height:1px;background:#000"></div>
<div class="a" style="left:406px;top:267px;width:237px;height:1px;background:#000"></div>
<div class="t" style="left:407px;top:258.97px;width:85px;font-family:'Liberation Sans', sans-serif;font-size:8.6px;line-height:8.6px;height:8.6px;text-align:center;font-weight:normal;color:#000;letter-spacing:0.45px;transform:scaleX(0.86);transform-origin:50% 50%;-webkit-text-stroke:0.3px #000;">DATE</div>
<div class="t" style="left:493px;top:258.97px;width:49px;font-family:'Liberation Sans', sans-serif;font-size:8.6px;line-height:8.6px;height:8.6px;text-align:center;font-weight:normal;color:#000;letter-spacing:0.45px;transform:scaleX(0.86);transform-origin:50% 50%;-webkit-text-stroke:0.3px #000;">TYPE</div>
<div class="t" style="left:543px;top:258.97px;width:99px;font-family:'Liberation Sans', sans-serif;font-size:8.6px;line-height:8.6px;height:8.6px;text-align:center;font-weight:normal;color:#000;letter-spacing:0.45px;transform:scaleX(0.86);transform-origin:50% 50%;-webkit-text-stroke:0.3px #000;">BOOKPAGE</div>
<div class="a" style="left:492px;top:257px;width:1px;height:11px;background:#000"></div>
<div class="a" style="left:542px;top:257px;width:1px;height:11px;background:#000"></div>
<div class="a" style="left:408px;top:283px;width:233px;height:11px;background:#f3f3fa"></div>
<div class="a" style="left:408px;top:311px;width:233px;height:11px;background:#f3f3fa"></div>
<div class="a" style="left:406px;top:281px;width:237px;height:1px;background:#000"></div>
<div class="a" style="left:406px;top:295px;width:237px;height:1px;background:#000"></div>
<div class="a" style="left:406px;top:309px;width:237px;height:1px;background:#000"></div>
<div class="a" style="left:406px;top:323px;width:237px;height:1px;background:#000"></div>
<div class="a" style="left:406px;top:247px;width:1px;height:77px;background:#000"></div>
<div class="a" style="left:642px;top:247px;width:1px;height:77px;background:#000"></div>
<div class="t" style="left:412px;top:270.75px;width:80px;font-family:'Liberation Mono', monospace;font-size:12.4px;line-height:12.4px;height:12.4px;text-align:left;font-weight:normal;color:#000;letter-spacing:0px;transform:scaleY(0.93);transform-origin:0 9.50px;">11/15/2012</div>
<div class="t" style="left:492px;top:270.75px;width:50px;font-family:'Liberation Mono', monospace;font-size:12.4px;line-height:12.4px;height:12.4px;text-align:center;font-weight:normal;color:#000;letter-spacing:0px;transform:scaleY(0.93);transform-origin:0 9.50px;">D</div>
<div class="t" style="left:542px;top:270.75px;width:100px;font-family:'Liberation Mono', monospace;font-size:12.4px;line-height:12.4px;height:12.4px;text-align:center;font-weight:normal;color:#000;letter-spacing:0px;transform:scaleY(0.93);transform-origin:0 9.50px;">296 002</div>
<div class="a" style="left:407px;top:327px;width:117px;height:9px;background:#add8e6"></div>
<div class="t" style="left:407px;top:327.97px;width:117px;font-family:'Liberation Sans', sans-serif;font-size:8.6px;line-height:8.6px;height:8.6px;text-align:center;font-weight:normal;color:#000;letter-spacing:0.45px;transform:scaleX(0.86);transform-origin:50% 50%;-webkit-text-stroke:0.3px #000;">PLUMBING</div>
<div class="a" style="left:525px;top:327px;width:117px;height:9px;background:#add8e6"></div>
<div class="t" style="left:525px;top:327.97px;width:117px;font-family:'Liberation Sans', sans-serif;font-size:8.6px;line-height:8.6px;height:8.6px;text-align:center;font-weight:normal;color:#000;letter-spacing:0.45px;transform:scaleX(0.86);transform-origin:50% 50%;-webkit-text-stroke:0.3px #000;">FIREPLACES</div>
<div class="a" style="left:406px;top:326px;width:237px;height:1px;background:#000"></div>
<div class="a" style="left:406px;top:336px;width:237px;height:1px;background:#000"></div>
<div class="a" style="left:406px;top:346px;width:237px;height:1px;background:#000"></div>
<div class="t" style="left:407px;top:337.97px;width:74px;font-family:'Liberation Sans', sans-serif;font-size:8.6px;line-height:8.6px;height:8.6px;text-align:center;font-weight:normal;color:#000;letter-spacing:0.45px;transform:scaleX(0.86);transform-origin:50% 50%;-webkit-text-stroke:0.3px #000;">FIXTURE</div>
<div class="t" style="left:482px;top:337.97px;width:42px;font-family:'Liberation Sans', sans-serif;font-size:8.6px;line-height:8.6px;height:8.6px;text-align:center;font-weight:normal;color:#000;letter-spacing:0.45px;transform:scaleX(0.86);transform-origin:50% 50%;-webkit-text-stroke:0.3px #000;">COUNT</div>
<div class="t" style="left:525px;top:337.97px;width:74px;font-family:'Liberation Sans', sans-serif;font-size:8.6px;line-height:8.6px;height:8.6px;text-align:center;font-weight:normal;color:#000;letter-spacing:0.45px;transform:scaleX(0.86);transform-origin:50% 50%;-webkit-text-stroke:0.3px #000;">TYPE</div>
<div class="t" style="left:600px;top:337.97px;width:42px;font-family:'Liberation Sans', sans-serif;font-size:8.6px;line-height:8.6px;height:8.6px;text-align:center;font-weight:normal;color:#000;letter-spacing:0.45px;transform:scaleX(0.86);transform-origin:50% 50%;-webkit-text-stroke:0.3px #000;">COUNT</div>
<div class="a" style="left:481px;top:336px;width:1px;height:11px;background:#000"></div>
<div class="a" style="left:599px;top:336px;width:1px;height:11px;background:#000"></div>
<div class="a" style="left:408px;top:362px;width:115px;height:11px;background:#f3f3fa"></div>
<div class="a" style="left:526px;top:362px;width:115px;height:11px;background:#f3f3fa"></div>
<div class="a" style="left:408px;top:390px;width:115px;height:11px;background:#f3f3fa"></div>
<div class="a" style="left:526px;top:390px;width:115px;height:11px;background:#f3f3fa"></div>
<div class="a" style="left:406px;top:360px;width:237px;height:1px;background:#000"></div>
<div class="a" style="left:406px;top:374px;width:237px;height:1px;background:#000"></div>
<div class="a" style="left:406px;top:388px;width:237px;height:1px;background:#000"></div>
<div class="a" style="left:406px;top:402px;width:237px;height:1px;background:#000"></div>
<div class="a" style="left:406px;top:326px;width:1px;height:77px;background:#000"></div>
<div class="a" style="left:524px;top:326px;width:1px;height:91px;background:#000"></div>
<div class="a" style="left:642px;top:326px;width:1px;height:91px;background:#000"></div>
<div class="a" style="left:524px;top:416px;width:119px;height:1px;background:#000"></div>
<div class="a" style="left:599px;top:402px;width:1px;height:15px;background:#000"></div>
<div class="t" style="left:525px;top:405.97px;width:74px;font-family:'Liberation Sans', sans-serif;font-size:8.6px;line-height:8.6px;height:8.6px;text-align:center;font-weight:normal;color:#000;letter-spacing:0.45px;transform:scaleX(0.86);transform-origin:50% 50%;-webkit-text-stroke:0.3px #000;">OPENINGS</div>
<div class="a" style="left:645px;top:593px;width:99px;height:9px;background:#add8e6"></div>
<div class="t" style="left:645px;top:593.97px;width:99px;font-family:'Liberation Sans', sans-serif;font-size:8.6px;line-height:8.6px;height:8.6px;text-align:center;font-weight:normal;color:#000;letter-spacing:0.45px;transform:scaleX(0.86);transform-origin:50% 50%;-webkit-text-stroke:0.3px #000;">PRINT DATE</div>
<div class="a" style="left:745px;top:593px;width:99px;height:9px;background:#add8e6"></div>
<div class="t" style="left:745px;top:593.97px;width:99px;font-family:'Liberation Sans', sans-serif;font-size:8.6px;line-height:8.6px;height:8.6px;text-align:center;font-weight:normal;color:#000;letter-spacing:0.45px;transform:scaleX(0.86);transform-origin:50% 50%;-webkit-text-stroke:0.3px #000;">LAST SAVED</div>
<div class="a" style="left:644px;top:592px;width:201px;height:1px;background:#000"></div>
<div class="a" style="left:644px;top:617px;width:201px;height:1px;background:#000"></div>
<div class="a" style="left:644px;top:592px;width:1px;height:26px;background:#000"></div>
<div class="a" style="left:844px;top:592px;width:1px;height:26px;background:#000"></div>
<div class="a" style="left:644px;top:602px;width:201px;height:1px;background:#000"></div>
<div class="a" style="left:744px;top:592px;width:1px;height:26px;background:#000"></div>
<div class="t" style="left:644px;top:605.75px;width:100px;font-family:'Liberation Mono', monospace;font-size:12.4px;line-height:12.4px;height:12.4px;text-align:center;font-weight:normal;color:#000;letter-spacing:0px;transform:scaleY(0.93);transform-origin:0 9.50px;">10/26/2023</div>
<div class="t" style="left:743px;top:605.75px;width:100px;font-family:'Liberation Mono', monospace;font-size:12.4px;line-height:12.4px;height:12.4px;text-align:center;font-weight:normal;color:#000;letter-spacing:0px;transform:scaleY(0.93);transform-origin:0 9.50px;">11/1/2019</div>
<div class="a" style="left:45px;top:621px;width:799px;height:9px;background:#add8e6"></div>
<div class="t" style="left:45px;top:621.97px;width:799px;font-family:'Liberation Sans', sans-serif;font-size:8.6px;line-height:8.6px;height:8.6px;text-align:center;font-weight:normal;color:#000;letter-spacing:0.45px;transform:scaleX(0.86);transform-origin:50% 50%;-webkit-text-stroke:0.3px #000;">BUILDING SECTIONS</div>
<div class="a" style="left:44px;top:620px;width:801px;height:1px;background:#000"></div>
<div class="a" style="left:44px;top:630px;width:801px;height:1px;background:#000"></div>
<div class="a" style="left:44px;top:640px;width:801px;height:1px;background:#000"></div>
<div class="t" style="left:45px;top:631.97px;width:39px;font-family:'Liberation Sans', sans-serif;font-size:8.6px;line-height:8.6px;height:8.6px;text-align:center;font-weight:normal;color:#000;letter-spacing:0.45px;transform:scaleX(0.86);transform-origin:50% 50%;-webkit-text-stroke:0.3px #000;">SEC#</div>
<div class="t" style="left:85px;top:631.97px;width:139px;font-family:'Liberation Sans', sans-serif;font-size:8.6px;line-height:8.6px;height:8.6px;text-align:center;font-weight:normal;color:#000;letter-spacing:0.45px;transform:scaleX(0.86);transform-origin:50% 50%;-webkit-text-stroke:0.3px #000;">TYPE</div>
<div class="t" style="left:225px;top:631.97px;width:49px;font-family:'Liberation Sans', sans-serif;font-size:8.6px;line-height:8.6px;height:8.6px;text-align:center;font-weight:normal;color:#000;letter-spacing:0.45px;transform:scaleX(0.86);transform-origin:50% 50%;-webkit-text-stroke:0.3px #000;">GRADE</div>
<div class="t" style="left:275px;top:631.97px;width:59px;font-family:'Liberation Sans', sans-serif;font-size:8.6px;line-height:8.6px;height:8.6px;text-align:center;font-weight:normal;color:#000;letter-spacing:0.45px;transform:scaleX(0.86);transform-origin:50% 50%;-webkit-text-stroke:0.3px #000;">EXT FIN</div>
<div class="t" style="left:335px;top:631.97px;width:59px;font-family:'Liberation Sans', sans-serif;font-size:8.6px;line-height:8.6px;height:8.6px;text-align:center;font-weight:normal;color:#000;letter-spacing:0.45px;transform:scaleX(0.86);transform-origin:50% 50%;-webkit-text-stroke:0.3px #000;">HEAT</div>
<div class="t" style="left:395px;top:631.97px;width:59px;font-family:'Liberation Sans', sans-serif;font-size:8.6px;line-height:8.6px;height:8.6px;text-align:center;font-weight:normal;color:#000;letter-spacing:0.45px;transform:scaleX(0.86);transform-origin:50% 50%;-webkit-text-stroke:0.3px #000;">AIR</div>
<div class="t" style="left:455px;top:631.97px;width:49px;font-family:'Liberation Sans', sans-serif;font-size:8.6px;line-height:8.6px;height:8.6px;text-align:center;font-weight:normal;color:#000;letter-spacing:0.45px;transform:scaleX(0.86);transform-origin:50% 50%;-webkit-text-stroke:0.3px #000;">SHGT</div>
<div class="t" style="left:505px;top:631.97px;width:64px;font-family:'Liberation Sans', sans-serif;font-size:8.6px;line-height:8.6px;height:8.6px;text-align:center;font-weight:normal;color:#000;letter-spacing:0.45px;transform:scaleX(0.86);transform-origin:50% 50%;-webkit-text-stroke:0.3px #000;">SQFT</div>
<div class="t" style="left:570px;top:631.97px;width:28px;font-family:'Liberation Sans', sans-serif;font-size:8.6px;line-height:8.6px;height:8.6px;text-align:center;font-weight:normal;color:#000;letter-spacing:0.45px;transform:scaleX(0.86);transform-origin:50% 50%;-webkit-text-stroke:0.3px #000;">WHGT</div>
<div class="t" style="left:599px;top:631.97px;width:45px;font-family:'Liberation Sans', sans-serif;font-size:8.6px;line-height:8.6px;height:8.6px;text-align:center;font-weight:normal;color:#000;letter-spacing:0.45px;transform:scaleX(0.86);transform-origin:50% 50%;-webkit-text-stroke:0.3px #000;">EYEAR</div>
<div class="t" style="left:645px;top:631.97px;width:99px;font-family:'Liberation Sans', sans-serif;font-size:8.6px;line-height:8.6px;height:8.6px;text-align:center;font-weight:normal;color:#000;letter-spacing:0.45px;transform:scaleX(0.86);transform-origin:50% 50%;-webkit-text-stroke:0.3px #000;">RPCN</div>
<div class="t" style="left:745px;top:631.97px;width:49px;font-family:'Liberation Sans', sans-serif;font-size:8.6px;line-height:8.6px;height:8.6px;text-align:center;font-weight:normal;color:#000;letter-spacing:0.45px;transform:scaleX(0.86);transform-origin:50% 50%;-webkit-text-stroke:0.3px #000;">DEP</div>
<div class="t" style="left:795px;top:631.97px;width:49px;font-family:'Liberation Sans', sans-serif;font-size:8.6px;line-height:8.6px;height:8.6px;text-align:center;font-weight:normal;color:#000;letter-spacing:0.45px;transform:scaleX(0.86);transform-origin:50% 50%;-webkit-text-stroke:0.3px #000;">% COMP</div>
<div class="a" style="left:84px;top:630px;width:1px;height:11px;background:#000"></div>
<div class="a" style="left:224px;top:630px;width:1px;height:11px;background:#000"></div>
<div class="a" style="left:274px;top:630px;width:1px;height:11px;background:#000"></div>
<div class="a" style="left:334px;top:630px;width:1px;height:11px;background:#000"></div>
<div class="a" style="left:394px;top:630px;width:1px;height:11px;background:#000"></div>
<div class="a" style="left:454px;top:630px;width:1px;height:11px;background:#000"></div>
<div class="a" style="left:504px;top:630px;width:1px;height:11px;background:#000"></div>
<div class="a" style="left:569px;top:630px;width:1px;height:11px;background:#000"></div>
<div class="a" style="left:598px;top:630px;width:1px;height:11px;background:#000"></div>
<div class="a" style="left:644px;top:630px;width:1px;height:11px;background:#000"></div>
<div class="a" style="left:744px;top:630px;width:1px;height:11px;background:#000"></div>
<div class="a" style="left:794px;top:630px;width:1px;height:11px;background:#000"></div>
<div class="a" style="left:46px;top:642px;width:797px;height:11px;background:#f3f3fa"></div>
<div class="a" style="left:46px;top:670px;width:797px;height:11px;background:#f3f3fa"></div>
<div class="a" style="left:46px;top:698px;width:797px;height:11px;background:#f3f3fa"></div>
<div class="a" style="left:46px;top:726px;width:797px;height:11px;background:#f3f3fa"></div>
<div class="a" style="left:46px;top:754px;width:797px;height:11px;background:#f3f3fa"></div>
<div class="a" style="left:44px;top:640px;width:801px;height:1px;background:#000"></div>
<div class="a" style="left:44px;top:654px;width:801px;height:1px;background:#000"></div>
<div class="a" style="left:44px;top:668px;width:801px;height:1px;background:#000"></div>
<div class="a" style="left:44px;top:682px;width:801px;height:1px;background:#000"></div>
<div class="a" style="left:44px;top:696px;width:801px;height:1px;background:#000"></div>
<div class="a" style="left:44px;top:710px;width:801px;height:1px;background:#000"></div>
<div class="a" style="left:44px;top:724px;width:801px;height:1px;background:#000"></div>
<div class="a" style="left:44px;top:738px;width:801px;height:1px;background:#000"></div>
<div class="a" style="left:44px;top:752px;width:801px;height:1px;background:#000"></div>
<div class="a" style="left:44px;top:766px;width:801px;height:1px;background:#000"></div>
<div class="a" style="left:44px;top:780px;width:801px;height:1px;background:#000"></div>
<div class="a" style="left:44px;top:798px;width:801px;height:1px;background:#000"></div>
<div class="a" style="left:44px;top:620px;width:1px;height:179px;background:#000"></div>
<div class="a" style="left:844px;top:620px;width:1px;height:179px;background:#000"></div>
<div class="t" style="left:45px;top:785.75px;width:1116px;font-family:'Liberation Mono', monospace;font-size:12.4px;line-height:12.4px;height:12.4px;text-align:center;font-weight:normal;color:#000;letter-spacing:0px;transform:scaleY(0.93);transform-origin:0 9.50px;">Building Replacement Cost New</div>
<div class="a" style="left:848px;top:593px;width:199px;height:9px;background:#add8e6"></div>
<div class="t" style="left:848px;top:593.97px;width:199px;font-family:'Liberation Sans', sans-serif;font-size:8.6px;line-height:8.6px;height:8.6px;text-align:center;font-weight:normal;color:#000;letter-spacing:0.45px;transform:scaleX(0.86);transform-origin:50% 50%;-webkit-text-stroke:0.3px #000;">BUILDING VALUE SUMMARY</div>
<div class="a" style="left:847px;top:592px;width:201px;height:1px;background:#000"></div>
<div class="a" style="left:847px;top:672px;width:201px;height:1px;background:#000"></div>
<div class="a" style="left:847px;top:592px;width:1px;height:81px;background:#000"></div>
<div class="a" style="left:1047px;top:592px;width:1px;height:81px;background:#000"></div>
<div class="a" style="left:847px;top:602px;width:201px;height:1px;background:#000"></div>
<div class="a" style="left:847px;top:616px;width:201px;height:1px;background:#000"></div>
<div class="t" style="left:849px;top:605.97px;width:97px;font-family:'Liberation Mono', monospace;font-size:9.5px;line-height:9.5px;height:9.5px;text-align:left;font-weight:bold;color:#000;letter-spacing:0px;transform:scaleY(0.93);transform-origin:0 7.28px;">RPCN</div>
<div class="t" style="left:948px;top:604.75px;width:96px;font-family:'Liberation Mono', monospace;font-size:12.4px;line-height:12.4px;height:12.4px;text-align:right;font-weight:normal;color:#000;letter-spacing:0px;transform:scaleY(0.93);transform-origin:0 9.50px;">$0</div>
<div class="a" style="left:849px;top:618px;width:96px;height:11px;background:#f3f3fa"></div>
<div class="a" style="left:949px;top:618px;width:97px;height:11px;background:#f3f3fa"></div>
<div class="a" style="left:847px;top:630px;width:201px;height:1px;background:#000"></div>
<div class="t" style="left:849px;top:619.97px;width:97px;font-family:'Liberation Mono', monospace;font-size:9.5px;line-height:9.5px;height:9.5px;text-align:left;font-weight:bold;color:#000;letter-spacing:0px;transform:scaleY(0.93);transform-origin:0 7.28px;">DEP</div>
<div class="t" style="left:950px;top:618.75px;width:50px;font-family:'Liberation Mono', monospace;font-size:12.4px;line-height:12.4px;height:12.4px;text-align:left;font-weight:normal;color:#000;letter-spacing:0px;transform:scaleY(0.93);transform-origin:0 9.50px;">&#8211;</div>
<div class="t" style="left:948px;top:618.75px;width:96px;font-family:'Liberation Mono', monospace;font-size:12.4px;line-height:12.4px;height:12.4px;text-align:right;font-weight:normal;color:#000;letter-spacing:0px;transform:scaleY(0.93);transform-origin:0 9.50px;">$0</div>
<div class="a" style="left:847px;top:644px;width:201px;height:1px;background:#000"></div>
<div class="t" style="left:849px;top:633.97px;width:97px;font-family:'Liberation Mono', monospace;font-size:9.5px;line-height:9.5px;height:9.5px;text-align:left;font-weight:bold;color:#000;letter-spacing:0px;transform:scaleY(0.93);transform-origin:0 7.28px;">RCLND</div>
<div class="t" style="left:948px;top:632.75px;width:96px;font-family:'Liberation Mono', monospace;font-size:12.4px;line-height:12.4px;height:12.4px;text-align:right;font-weight:normal;color:#000;letter-spacing:0px;transform:scaleY(0.93);transform-origin:0 9.50px;">$0</div>
<div class="a" style="left:849px;top:646px;width:96px;height:11px;background:#f3f3fa"></div>
<div class="a" style="left:949px;top:646px;width:97px;height:11px;background:#f3f3fa"></div>
<div class="a" style="left:847px;top:658px;width:201px;height:1px;background:#000"></div>
<div class="t" style="left:849px;top:647.97px;width:97px;font-family:'Liberation Mono', monospace;font-size:9.5px;line-height:9.5px;height:9.5px;text-align:left;font-weight:bold;color:#000;letter-spacing:0px;transform:scaleY(0.93);transform-origin:0 7.28px;">OBS F/E</div>
<div class="t" style="left:950px;top:646.75px;width:50px;font-family:'Liberation Mono', monospace;font-size:12.4px;line-height:12.4px;height:12.4px;text-align:left;font-weight:normal;color:#000;letter-spacing:0px;transform:scaleY(0.93);transform-origin:0 9.50px;">&#8211;</div>
<div class="t" style="left:948px;top:646.75px;width:96px;font-family:'Liberation Mono', monospace;font-size:12.4px;line-height:12.4px;height:12.4px;text-align:right;font-weight:normal;color:#000;letter-spacing:0px;transform:scaleY(0.93);transform-origin:0 9.50px;">$0</div>
<div class="a" style="left:847px;top:672px;width:201px;height:1px;background:#000"></div>
<div class="t" style="left:849px;top:661.97px;width:97px;font-family:'Liberation Mono', monospace;font-size:9.5px;line-height:9.5px;height:9.5px;text-align:left;font-weight:bold;color:#000;letter-spacing:0px;transform:scaleY(0.93);transform-origin:0 7.28px;">LCF</div>
<div class="t" style="left:948px;top:660.75px;width:96px;font-family:'Liberation Mono', monospace;font-size:12.4px;line-height:12.4px;height:12.4px;text-align:right;font-weight:normal;color:#000;letter-spacing:0px;transform:scaleY(0.93);transform-origin:0 9.50px;">$0</div>
<div class="t" style="left:849px;top:660.75px;width:95px;font-family:'Liberation Mono', monospace;font-size:12.4px;line-height:12.4px;height:12.4px;text-align:right;font-weight:normal;color:#000;letter-spacing:0px;transform:scaleY(0.93);transform-origin:0 9.50px;">100%</div>
<div class="a" style="left:948px;top:629px;width:100px;height:3px;background:#000"></div>
<div class="a" style="left:948px;top:657px;width:100px;height:3px;background:#000"></div>
<div class="a" style="left:946px;top:602px;width:2px;height:71px;background:#000"></div>
<div class="a" style="left:848px;top:682px;width:199px;height:19px;background:#ffff00"></div>
<div class="a" style="left:847px;top:681px;width:201px;height:1px;background:#000"></div>
<div class="a" style="left:847px;top:799px;width:201px;height:1px;background:#000"></div>
<div class="a" style="left:847px;top:681px;width:1px;height:119px;background:#000"></div>
<div class="a" style="left:1047px;top:681px;width:1px;height:119px;background:#000"></div>
<div class="a" style="left:847px;top:701px;width:201px;height:1px;background:#000"></div>
<div class="t" style="left:847px;top:685.67px;width:200px;font-family:'Liberation Mono', monospace;font-size:13.8px;line-height:13.8px;height:13.8px;text-align:center;font-weight:bold;color:#000;letter-spacing:0px;transform:scaleY(0.88);transform-origin:0 10.58px;">PARCEL SUMMARY</div>
<div class="a" style="left:847px;top:715px;width:201px;height:1px;background:#000"></div>
<div class="t" style="left:849px;top:703.97px;width:97px;font-family:'Liberation Mono', monospace;font-size:9.5px;line-height:9.5px;height:9.5px;text-align:left;font-weight:bold;color:#000;letter-spacing:0px;transform:scaleY(0.93);transform-origin:0 7.28px;">TOTAL BLDG VALUE</div>
<div class="t" style="left:948px;top:703.75px;width:96px;font-family:'Liberation Mono', monospace;font-size:12.4px;line-height:12.4px;height:12.4px;text-align:right;font-weight:normal;color:#000;letter-spacing:0px;transform:scaleY(0.93);transform-origin:0 9.50px;">$0</div>
<div class="a" style="left:849px;top:717px;width:96px;height:11px;background:#f3f3fa"></div>
<div class="a" style="left:949px;top:717px;width:97px;height:11px;background:#f3f3fa"></div>
<div class="a" style="left:847px;top:729px;width:201px;height:1px;background:#000"></div>
<div class="t" style="left:849px;top:717.97px;width:97px;font-family:'Liberation Mono', monospace;font-size:9.5px;line-height:9.5px;height:9.5px;text-align:left;font-weight:bold;color:#000;letter-spacing:0px;transform:scaleY(0.93);transform-origin:0 7.28px;">OBLDG VALUE</div>
<div class="t" style="left:950px;top:717.75px;width:50px;font-family:'Liberation Mono', monospace;font-size:12.4px;line-height:12.4px;height:12.4px;text-align:left;font-weight:normal;color:#000;letter-spacing:0px;transform:scaleY(0.93);transform-origin:0 9.50px;">+</div>
<div class="t" style="left:948px;top:717.75px;width:96px;font-family:'Liberation Mono', monospace;font-size:12.4px;line-height:12.4px;height:12.4px;text-align:right;font-weight:normal;color:#000;letter-spacing:0px;transform:scaleY(0.93);transform-origin:0 9.50px;">$8,523</div>
<div class="a" style="left:847px;top:743px;width:201px;height:1px;background:#000"></div>
<div class="t" style="left:849px;top:731.97px;width:97px;font-family:'Liberation Mono', monospace;font-size:9.5px;line-height:9.5px;height:9.5px;text-align:left;font-weight:bold;color:#000;letter-spacing:0px;transform:scaleY(0.93);transform-origin:0 7.28px;">LAND VALUE</div>
<div class="t" style="left:950px;top:731.75px;width:50px;font-family:'Liberation Mono', monospace;font-size:12.4px;line-height:12.4px;height:12.4px;text-align:left;font-weight:normal;color:#000;letter-spacing:0px;transform:scaleY(0.93);transform-origin:0 9.50px;">+</div>
<div class="t" style="left:948px;top:731.75px;width:96px;font-family:'Liberation Mono', monospace;font-size:12.4px;line-height:12.4px;height:12.4px;text-align:right;font-weight:normal;color:#000;letter-spacing:0px;transform:scaleY(0.93);transform-origin:0 9.50px;">$35,910</div>
<div class="a" style="left:849px;top:745px;width:96px;height:11px;background:#f3f3fa"></div>
<div class="a" style="left:949px;top:745px;width:97px;height:11px;background:#f3f3fa"></div>
<div class="a" style="left:847px;top:757px;width:201px;height:1px;background:#000"></div>
<div class="t" style="left:849px;top:745.97px;width:97px;font-family:'Liberation Mono', monospace;font-size:9.5px;line-height:9.5px;height:9.5px;text-align:left;font-weight:bold;color:#000;letter-spacing:0px;transform:scaleY(0.93);transform-origin:0 7.28px;">APPRAISED VALUE</div>
<div class="t" style="left:948px;top:745.75px;width:96px;font-family:'Liberation Mono', monospace;font-size:12.4px;line-height:12.4px;height:12.4px;text-align:right;font-weight:normal;color:#000;letter-spacing:0px;transform:scaleY(0.93);transform-origin:0 9.50px;">$44,433</div>
<div class="a" style="left:849px;top:759px;width:96px;height:11px;background:#f3f3fa"></div>
<div class="a" style="left:949px;top:759px;width:97px;height:11px;background:#f3f3fa"></div>
<div class="a" style="left:847px;top:771px;width:201px;height:1px;background:#000"></div>
<div class="t" style="left:849px;top:759.97px;width:97px;font-family:'Liberation Mono', monospace;font-size:9.5px;line-height:9.5px;height:9.5px;text-align:left;font-weight:bold;color:#000;letter-spacing:0px;transform:scaleY(0.93);transform-origin:0 7.28px;">DEFERRED VALUE</div>
<div class="t" style="left:950px;top:759.75px;width:50px;font-family:'Liberation Mono', monospace;font-size:12.4px;line-height:12.4px;height:12.4px;text-align:left;font-weight:normal;color:#000;letter-spacing:0px;transform:scaleY(0.93);transform-origin:0 9.50px;">&#8211;</div>
<div class="t" style="left:948px;top:759.75px;width:96px;font-family:'Liberation Mono', monospace;font-size:12.4px;line-height:12.4px;height:12.4px;text-align:right;font-weight:normal;color:#000;letter-spacing:0px;transform:scaleY(0.93);transform-origin:0 9.50px;">$0</div>
<div class="a" style="left:947px;top:742px;width:101px;height:3px;background:#000"></div>
<div class="a" style="left:847px;top:771px;width:201px;height:1px;background:#000"></div>
<div class="a" style="left:902px;top:771px;width:146px;height:3px;background:#000"></div>
<div class="a" style="left:946px;top:701px;width:2px;height:72px;background:#000"></div>
<div class="a" style="left:903px;top:774px;width:144px;height:25px;background:#ffff00"></div>
<div class="a" style="left:902px;top:772px;width:1px;height:28px;background:#000"></div>
<div class="t" style="left:847px;top:774.97px;width:55px;font-family:'Liberation Mono', monospace;font-size:9.5px;line-height:9.5px;height:9.5px;text-align:center;font-weight:bold;color:#000;letter-spacing:0px;transform:scaleY(0.93);transform-origin:0 7.28px;">TAXABLE</div>
<div class="t" style="left:847px;top:784.97px;width:55px;font-family:'Liberation Mono', monospace;font-size:9.5px;line-height:9.5px;height:9.5px;text-align:center;font-weight:bold;color:#000;letter-spacing:0px;transform:scaleY(0.93);transform-origin:0 7.28px;">VALUE</div>
<div class="t" style="left:903px;top:774.17px;width:141px;font-family:'Liberation Sans', sans-serif;font-size:19px;line-height:19px;height:19px;text-align:right;font-weight:bold;color:#d00000;letter-spacing:0px;">$44,433</div>
</body></html>
